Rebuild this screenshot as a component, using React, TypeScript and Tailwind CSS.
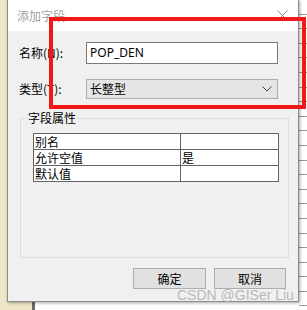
import React from 'react';

const font = { fontFamily: '"Microsoft YaHei", "Noto Sans CJK SC", sans-serif' };

const rows: [string, string][] = [
  ['别名', ''],
  ['允许空值', '是'],
  ['默认值', ''],
];

const Chevron: React.FC = () => (
  <svg width="10" height="6" viewBox="0 0 10 6" className="mr-[5px]">
    <path d="M0.5 0.5 L5 5 L9.5 0.5" fill="none" stroke="#444" strokeWidth="1" />
  </svg>
);

const App: React.FC = () => {
  return (
    <div className="relative w-[307px] h-[310px] overflow-hidden bg-white text-[12px] text-black" style={font}>
      {/* stuff behind the dialog */}
      <div className="absolute left-0 top-0 w-[8px] h-[310px] bg-[#eee6c8]" />
      <div className="absolute left-0 top-[302px] w-[32px] h-[8px] bg-[#eee6c8]" />
      <div className="absolute left-[32px] top-[302px] w-[3px] h-[8px] bg-[#6a6a6a]" />
      <div className="absolute right-0 top-0 w-[8px] h-[310px] flex flex-col">
        {Array.from({ length: 21 }).map((_, i) => (
          <div key={i} className="h-[14.6px] shrink-0 border-b border-[#9a9a9a]" />
        ))}
      </div>

      {/* dialog */}
      <div className="relative ml-[7px] w-[292px] h-[302px] flex flex-col border border-[#8c8c8c] border-t-0 shadow-[1px_1px_3px_rgba(0,0,0,0.35)]">
        <div className="h-[31px] bg-white flex items-center justify-between pl-[9px] pr-[10px]">
          <span className="text-[12px] text-[#a0a0a0]">添加字段</span>
          <svg width="11" height="11" viewBox="0 0 11 11">
            <path d="M0.5 0.5 L10.5 10.5 M10.5 0.5 L0.5 10.5" stroke="#8a8a8a" strokeWidth="1" />
          </svg>
        </div>
        <div className="flex-1 bg-[#f0f0f0] flex flex-col px-[11px]">
          <div className="flex items-center mt-[11px] h-[22px]">
            <span className="w-[67px]">名称(N):</span>
            <div className="w-[192px] h-[22px] bg-white border border-[#7a7a7a] flex items-center pl-[3px] text-[12px]" style={{ fontFamily: '"Segoe UI", "Noto Sans", sans-serif' }}>
              POP_DEN
            </div>
          </div>
          <div className="flex items-center mt-[15px] h-[20px]">
            <span className="w-[67px]">类型(T):</span>
            <div className="w-[192px] h-[20px] bg-[#e5e5e5] border border-[#adadad] flex items-center justify-between pl-[3px]">
              <span>长整型</span>
              <Chevron />
            </div>
          </div>

          <div className="relative mt-[19px] ml-[1px] w-[269px] h-[140px] border border-[#dcdcdc]">
            <span className="absolute left-[6px] top-[-9px] px-[1px] bg-[#f0f0f0] leading-[16px]">字段属性</span>
            <table className="mt-[14px] ml-[12px] w-[246px] border-collapse bg-white text-[12px]">
              <tbody>
                {rows.map(([k, v]) => (
                  <tr key={k} className="h-[16px]">
                    <td className="w-[147px] border border-[#646464] pl-[1px] leading-[14px] p-0">{k}</td>
                    <td className="border border-[#646464] pl-[1px] leading-[14px] p-0">{v}</td>
                  </tr>
                ))}
              </tbody>
            </table>
          </div>

          <div className="flex justify-end gap-[8px] mt-[10px] mr-[1px]">
            <button className="w-[73px] h-[21px] bg-[#e1e1e1] border border-[#adadad] text-[12px]">确定</button>
            <button className="w-[72px] h-[21px] bg-[#e1e1e1] border border-[#adadad] text-[12px]">取消</button>
          </div>
        </div>
      </div>

      {/* watermark */}
      <div className="absolute left-[177px] top-[285px] text-[14px] leading-[20px] text-[#a8a8a8]/80 whitespace-nowrap" style={{ fontFamily: '"Liberation Sans", sans-serif' }}>
        CSDN @GISer Liu
      </div>

      {/* red annotation box */}
      <div className="absolute left-[49px] top-[17px] w-[257px] h-[92px] border-[4px] border-[#f01818]" />
    </div>
  );
};

export default App;
